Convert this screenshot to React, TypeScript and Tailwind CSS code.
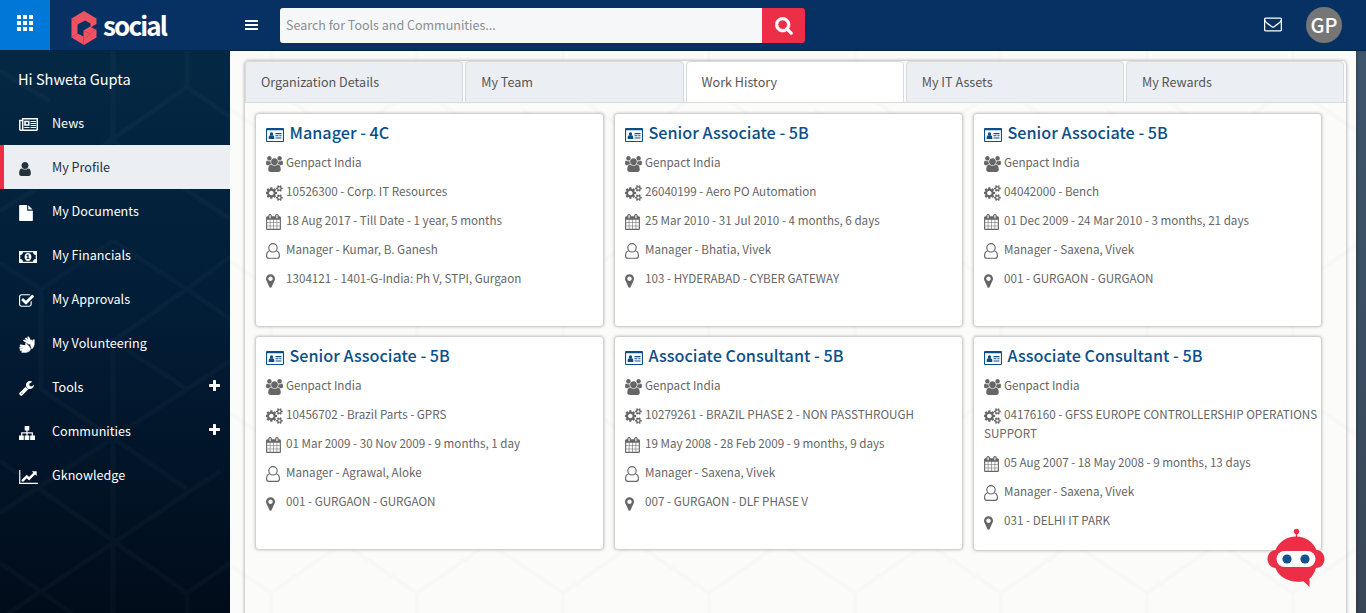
import React from "react";

const CALENDAR = "M192 1664h288v-288h-288v288zm352 0h320v-288h-320v288zm-352-352h288v-320h-288v320zm352 0h320v-320h-320v320zm-352-384h288v-288h-288v288zm736 736h320v-288h-320v288zm-384-736h320v-288h-320v288zm768 736h288v-288h-288v288zm-384-352h320v-320h-320v320zm-352-864v-288q0-13-9.5-22.5t-22.5-9.5h-64q-13 0-22.5 9.5t-9.5 22.5v288q0 13 9.5 22.5t22.5 9.5h64q13 0 22.5-9.5t9.5-22.5zm736 864h288v-320h-288v320zm-384-384h320v-288h-320v288zm384 0h288v-288h-288v288zm32-480v-288q0-13-9.5-22.5t-22.5-9.5h-64q-13 0-22.5 9.5t-9.5 22.5v288q0 13 9.5 22.5t22.5 9.5h64q13 0 22.5-9.5t9.5-22.5zm384-64v1280q0 52-38 90t-90 38h-1408q-52 0-90-38t-38-90v-1280q0-52 38-90t90-38h128v-96q0-66 47-113t113-47h64q66 0 113 47t47 113v96h384v-96q0-66 47-113t113-47h64q66 0 113 47t47 113v96h128q52 0 90 38t38 90z";
const USERS = "M529 896q-162 5-265 128h-134q-82 0-138-40.5t-56-118.5q0-353 124-353 6 0 43.5 21t97.5 42.5 119 21.5q67 0 133-23-5 37-5 66 0 139 81 256zm1071 637q0 120-73 189.5t-194 69.5h-874q-121 0-194-69.5t-73-189.5q0-53 3.5-103.5t14-109 26.5-108.5 43-97.5 62-81 85.5-53.5 111.5-20q10 0 43 21.5t73 48 107 48 135 21.5 135-21.5 107-48 73-48 43-21.5q61 0 111.5 20t85.5 53.5 62 81 43 97.5 26.5 108.5 14 109 3.5 103.5zm-1024-1277q0 106-75 181t-181 75-181-75-75-181 75-181 181-75 181 75 75 181zm704 384q0 159-112.5 271.5t-271.5 112.5-271.5-112.5-112.5-271.5 112.5-271.5 271.5-112.5 271.5 112.5 112.5 271.5zm576 225q0 78-56 118.5t-138 40.5h-134q-103-123-265-128 81-117 81-256 0-29-5-66 66 23 133 23 59 0 119-21.5t97.5-42.5 43.5-21q124 0 124 353zm-128-609q0 106-75 181t-181 75-181-75-75-181 75-181 181-75 181 75 75 181z";
const SEARCH = "M1216 832q0-185-131.5-316.5t-316.5-131.5-316.5 131.5-131.5 316.5 131.5 316.5 316.5 131.5 316.5-131.5 131.5-316.5zm512 832q0 52-38 90t-90 38q-54 0-90-38l-343-342q-179 124-399 124-143 0-273.5-55.5t-225-150-150-225-55.5-273.5 55.5-273.5 150-225 225-150 273.5-55.5 273.5 55.5 225 150 150 225 55.5 273.5q0 220-124 399l343 343q37 37 37 90z";
const USER = "M1536 1399q0 109-62.5 187t-150.5 78h-854q-88 0-150.5-78t-62.5-187q0-85 8.5-160.5t31.5-152 58.5-131 94-89 134.5-34.5q131 128 313 128t313-128q76 0 134.5 34.5t94 89 58.5 131 31.5 152 8.5 160.5zm-256-887q0 159-112.5 271.5t-271.5 112.5-271.5-112.5-112.5-271.5 112.5-271.5 271.5-112.5 271.5 112.5 112.5 271.5z";
const MARKER = "M1152 640q0-106-75-181t-181-75-181 75-75 181 75 181 181 75 181-75 75-181zm256 0q0 109-33 179l-364 774q-16 33-47.5 52t-67.5 19-67.5-19-46.5-52l-365-774q-33-70-33-179 0-212 150-362t362-150 362 150 150 362z";
const COGS = "M832 896q0-106-75-181t-181-75-181 75-75 181 75 181 181 75 181-75 75-181zm768 512q0-52-38-90t-90-38-90 38-38 90q0 53 37.5 90.5t90.5 37.5 90.5-37.5 37.5-90.5zm0-1024q0-52-38-90t-90-38-90 38-38 90q0 53 37.5 90.5t90.5 37.5 90.5-37.5 37.5-90.5zm-384 421v185q0 10-7 19.5t-16 10.5l-155 24q-11 35-32 76 34 48 90 115 7 11 7 20 0 12-7 19-23 30-82.5 89.5t-78.5 59.5q-11 0-21-7l-115-90q-37 19-77 31-11 108-23 155-7 24-30 24h-186q-11 0-20-7.5t-10-17.5l-23-153q-34-10-75-31l-118 89q-7 7-20 7-11 0-21-8-144-133-144-160 0-9 7-19 10-14 41-53t47-61q-23-44-35-82l-152-24q-10-1-17-9.5t-7-19.5v-185q0-10 7-19.5t16-10.5l155-24q11-35 32-76-34-48-90-115-7-11-7-20 0-12 7-20 22-30 82-89t79-59q11 0 21 7l115 90q34-18 77-32 11-108 23-154 7-24 30-24h186q11 0 20 7.5t10 17.5l23 153q34 10 75 31l118-89q8-7 20-7 11 0 21 8 144 133 144 160 0 8-7 19-12 16-42 54t-45 60q23 48 34 82l152 23q10 2 17 10.5t7 19.5zm640 533v140q0 16-149 31-12 27-30 52 51 113 51 138 0 4-4 7-122 71-124 71-8 0-46-47t-52-68q-20 2-30 2t-30-2q-14 21-52 68t-46 47q-2 0-124-71-4-3-4-7 0-25 51-138-18-25-30-52-149-15-149-31v-140q0-16 149-31 13-29 30-52-51-113-51-138 0-4 4-7 4-2 35-20t59-34 30-16q8 0 46 46.5t52 67.5q20-2 30-2t30 2q51-71 92-112l6-2q4 0 124 70 4 3 4 7 0 25-51 138 17 23 30 52 149 15 149 31zm0-1024v140q0 16-149 31-12 27-30 52 51 113 51 138 0 4-4 7-122 71-124 71-8 0-46-47t-52-68q-20 2-30 2t-30-2q-14 21-52 68t-46 47q-2 0-124-71-4-3-4-7 0-25 51-138-18-25-30-52-149-15-149-31v-140q0-16 149-31 13-29 30-52-51-113-51-138 0-4 4-7 4-2 35-20t59-34 30-16q8 0 46 46.5t52 67.5q20-2 30-2t30 2q51-71 92-112l6-2q4 0 124 70 4 3 4 7 0 25-51 138 17 23 30 52 149 15 149 31z";
const ENVELOPE = "M1664 1504v-768q-32 36-69 66-268 206-426 338-51 43-83 67t-86.5 48.5-102.5 24.5h-2q-48 0-102.5-24.5t-86.5-48.5-83-67q-158-132-426-338-37-30-69-66v768q0 13 9.5 22.5t22.5 9.5h1472q13 0 22.5-9.5t9.5-22.5zm0-1051v-24.5l-.5-13-3-12.5-5.5-9-9-7.5-14-2.5h-1472q-13 0-22.5 9.5t-9.5 22.5q0 168 147 284 193 152 401 317 6 5 35 29.5t46 37.5 44.5 31.5 50.5 27.5 43 9h2q20 0 43-9t50.5-27.5 44.5-31.5 46-37.5 35-29.5q208-165 401-317 54-43 100.5-115.5t46.5-131.5zm128-37v1088q0 66-47 113t-113 47h-1472q-66 0-113-47t-47-113v-1088q0-66 47-113t113-47h1472q66 0 113 47t47 113z";
const CHECK = "M1472 930v318q0 119-84.5 203.5t-203.5 84.5h-832q-119 0-203.5-84.5t-84.5-203.5v-832q0-119 84.5-203.5t203.5-84.5h832q63 0 117 25 15 7 18 23 3 17-9 29l-49 49q-10 10-23 10-3 0-9-2-23-6-45-6h-832q-66 0-113 47t-47 113v832q0 66 47 113t113 47h832q66 0 113-47t47-113v-254q0-13 9-22l64-64q10-10 23-10 6 0 12 3 20 8 20 29zm231-489l-814 814q-24 24-57 24t-57-24l-430-430q-24-24-24-57t24-57l110-110q24-24 57-24t57 24l263 263 647-647q24-24 57-24t57 24l110 110q24 24 24 57t-24 57z";
const CHART = "M2048 1536v128h-2048v-1536h128v1408h1920zm-128-1248v435q0 21-19.5 29.5t-35.5-7.5l-121-121-633 633q-10 10-23 10t-23-10l-233-233-416 416-192-192 585-585q10-10 23-10t23 10l233 233 464-464-121-121q-16-16-7.5-35.5t29.5-19.5h435q14 0 23 9t9 23z";
const PLUS = "M1600 736v192q0 40-28 68t-68 28h-416v416q0 40-28 68t-68 28h-192q-40 0-68-28t-28-68v-416h-416q-40 0-68-28t-28-68v-192q0-40 28-68t68-28h416v-416q0-40 28-68t68-28h192q40 0 68 28t28 68v416h416q40 0 68 28t28 68z";
const FILE = "M1152 512v-472q22 14 36 28l408 408q14 14 28 36h-472zm-128 32q0 40 28 68t68 28h544v1056q0 40-28 68t-68 28h-1344q-40 0-68-28t-28-68v-1600q0-40 28-68t68-28h800v544z";
const WRENCH = "M448 1472q0-26-19-45t-45-19-45 19-19 45 19 45 45 19 45-19 19-45zm644-420l-682 682q-37 37-90 37-52 0-91-37l-106-108q-38-36-38-90 0-53 38-91l681-681q39 98 114.5 173.5t173.5 114.5zm634-435q0 39-23 106-47 134-164.5 217.5t-258.5 83.5q-185 0-316.5-131.5t-131.5-316.5 131.5-316.5 316.5-131.5q58 0 121.5 16.5t107.5 46.5q16 11 16 28t-16 28l-293 169v224l193 107q5-3 79-48.5t135.5-81 70.5-35.5q15 0 23.5 10t8.5 25z";

function Glyph({ d, box, className }: { d: string; box: string; className: string }) {
  return (
    <svg viewBox={box} className={className} fill="currentColor">
      <path d={d} />
    </svg>
  );
}

const NewsIcon = () => (
  <svg viewBox="0 0 19 13" className="h-[13px] w-[19px]" fill="none" stroke="currentColor">
    <path d="M3.500 12.300H17a1.300 1.300 0 0 0 1.300-1.300V.8H3.700V11a1.400 1.400 0 0 1-2.900 0V2.500h2.700" strokeWidth="1.500" />
    <rect x="6" y="3.500" width="3.800" height="3.500" strokeWidth="1.600" />
    <path d="M11.500 3.500H17M11.500 5.500H17M11.500 7.500H17M5.200 9.500h5.300M11.500 9.500H17" strokeWidth="1.100" />
  </svg>
);
const MoneyIcon = () => (
  <svg viewBox="0 0 18 12" className="h-3 w-[18px]" fill="currentColor" fillRule="evenodd">
    <path d="M0 0H18V12H0ZM3.900 1.300A2.600 2.600 0 0 1 1.300 3.900V8.100A2.600 2.600 0 0 1 3.900 10.700H14.100A2.600 2.600 0 0 1 16.700 8.100V3.900A2.600 2.600 0 0 1 14.100 1.300Z" />
    <path d="M9 2c2.100 0 3.400 1.800 3.400 4S11.100 10 9 10 5.600 8.200 5.600 6 6.900 2 9 2ZM8.500 3.500 7.300 4.600l.6.700.5-.4v2.300h-.9v.9h3v-.9h-.9V3.500Z" />
  </svg>
);
const HandsIcon = () => (
  <svg viewBox="0 0 16 17" className="h-[17px] w-4" fill="none" stroke="currentColor" strokeLinecap="round" strokeWidth="1.900">
    <path d="M10 7.500 5.200 4.500M10.500 6.500 7 2.600M11.500 6 9.300 1.400M14.700 4.200 14.500 8" />
    <path d="M8 5 13 4 15.200 8C15.200 10.500 14 12 12.800 13L11.300 8.600Z" fill="currentColor" strokeWidth=".5" />
    <path d="M7 10.500 1.700 9.500M7 12 1.200 11.700M7 13.700 1.700 13.900M8 15.300 3.400 15.800M9.200 11 7 8" />
    <path d="M5 9.800 9.500 9.800 11.500 12.500C11.500 15 9.500 16.500 5.500 16.300Z" fill="currentColor" strokeWidth=".5" />
  </svg>
);
const SitemapIcon = () => (
  <svg viewBox="0 0 16 14" className="h-[14px] w-4" fill="currentColor">
    <path d="M5.700 0h4.600v4.500H8.600v1.800h5.300v3.200H16V14h-4.800V9.500h1.500V7.400H8.600v2.100h1.700V14H5.700V9.500h1.700V7.400H3.300v2.100h1.500V14H0V9.500h2.100V6.300h5.300V4.500H5.700Z" />
  </svg>
);
const CardIcon = () => (
  <svg viewBox="0 0 18 14" className="h-[14px] w-[18px]" fill="currentColor">
    <path fillRule="evenodd" d="M1 0H17a1 1 0 0 1 1 1V13a1 1 0 0 1-1 1H1a1 1 0 0 1-1-1V1A1 1 0 0 1 1 0ZM1.100 2.200V12.900H16.900V2.200Z" />
    <circle cx="5.500" cy="5.900" r="1.700" />
    <path d="M2.700 11V9.600C2.700 8 3.500 7.200 4.300 7.200H6.700C7.500 7.200 8.300 8 8.300 9.600V11ZM9.500 5h6v1.200h-6ZM9.500 7.300h3v1h-3ZM13.300 7.300h2.200v1h-2.200ZM9.500 9.500h6v1.100h-6Z" />
  </svg>
);
const UserOutline = () => (
  <svg viewBox="0 0 14 16" className="h-4 w-[14px]" fill="none" stroke="currentColor" strokeWidth="1.150">
    <path d="M3.700 7.800C1.400 8.400.6 10.200.6 12.700c0 1.500 1 2.600 2.300 2.600h8.200c1.300 0 2.300-1.100 2.300-2.600 0-2.500-.8-4.300-3.100-4.900" />
    <circle cx="7" cy="4.800" r="4.200" />
  </svg>
);

const menu: { label: string; icon: React.ReactNode; active?: boolean; plus?: boolean }[] = [
  { label: "News", icon: <NewsIcon /> },
  { label: "My Profile", icon: <Glyph d={USER} box="256 128 1280 1536" className="h-[14px] w-3" />, active: true },
  { label: "My Documents", icon: <Glyph d={FILE} box="128 0 1536 1792" className="h-4 w-[14px]" /> },
  { label: "My Financials", icon: <MoneyIcon /> },
  { label: "My Approvals", icon: <Glyph d={CHECK} box="64 128 1664 1408" className="h-[13px] w-[15px]" /> },
  { label: "My Volunteering", icon: <HandsIcon /> },
  { label: "Tools", icon: <Glyph d={WRENCH} box="64 128 1664 1664" className="h-[15px] w-[15px]" />, plus: true },
  { label: "Communities", icon: <SitemapIcon />, plus: true },
  { label: "Gknowledge", icon: <Glyph d={CHART} box="0 128 2048 1536" className="h-[14px] w-[19px]" /> },
];

const jobs = [
  ["Manager - 4C", "10526300 - Corp. IT Resources", "18 Aug 2017 - Till Date - 1 year, 5 months", "Manager - Kumar, B. Ganesh", "1304121 - 1401-G-India: Ph V, STPI, Gurgaon"],
  ["Senior Associate - 5B", "26040199 - Aero PO Automation", "25 Mar 2010 - 31 Jul 2010 - 4 months, 6 days", "Manager - Bhatia, Vivek", "103 - HYDERABAD - CYBER GATEWAY"],
  ["Senior Associate - 5B", "04042000 - Bench", "01 Dec 2009 - 24 Mar 2010 - 3 months, 21 days", "Manager - Saxena, Vivek", "001 - GURGAON - GURGAON"],
  ["Senior Associate - 5B", "10456702 - Brazil Parts - GPRS", "01 Mar 2009 - 30 Nov 2009 - 9 months, 1 day", "Manager - Agrawal, Aloke", "001 - GURGAON - GURGAON"],
  ["Associate Consultant - 5B", "10279261 - BRAZIL PHASE 2 - NON PASSTHROUGH", "19 May 2008 - 28 Feb 2009 - 9 months, 9 days", "Manager - Saxena, Vivek", "007 - GURGAON - DLF PHASE V"],
  ["Associate Consultant - 5B", "04176160 - GFSS EUROPE CONTROLLERSHIP OPERATIONS SUPPORT", "05 Aug 2007 - 18 May 2008 - 9 months, 13 days", "Manager - Saxena, Vivek", "031 - DELHI IT PARK"],
];

function Row({ icon, children }: { icon: React.ReactNode; children: React.ReactNode }) {
  return (
    <p className="mb-[10px] text-[11.650px] leading-[19px] text-[#666]">
      <span className="-my-1 mr-[2px] inline-flex h-[17px] w-[18px] items-center align-[-5px]">{icon}</span>
      {children}
    </p>
  );
}

function JobCard({ job, wraps }: { job: string[]; wraps: boolean }) {
  return (
    <section className={`rounded-[3px] bg-white pt-2 pl-[10px] shadow-[0_0_3px_1px_rgba(0,0,0,0.25)] ${wraps ? "h-[213px]" : "h-[212px]"}`}>
      <h3 className="mb-[10px] flex h-5 items-center gap-[6px] text-[16.200px] leading-5 font-medium text-[#0b4f8a]">
        <span className="mt-[6px]"><CardIcon /></span>
        <span className="-ml-[0.500px]">{job[0]}</span>
      </h3>
      <Row icon={<Glyph d={USERS} box="-64 0 1920 1792" className="h-4 w-[17px]" />}>Genpact India</Row>
      <Row icon={<Glyph d={COGS} box="0 0 1856 1792" className="h-4 w-[17px]" />}>{job[1]}</Row>
      <Row icon={<Glyph d={CALENDAR} box="64 0 1664 1792" className="h-4 w-[15px]" />}>{job[2]}</Row>
      <Row icon={<UserOutline />}>{job[3]}</Row>
      <Row icon={<Glyph d={MARKER} box="384 128 1024 1536" className="mb-[2px] h-[14px] w-[9px]" />}>{job[4]}</Row>
    </section>
  );
}

const LATTICE = "M113 -8V90L0 160M113 90L230 168M0 212L41 238V338L187 438M113 190L41 238M113 190L187 238L230 206M113 290L187 238L230 268M187 338L113 290V563M187 338L230 310M187 338L0 462M0 410L187 542V563M220 420L0 568M0 512L73 563M187 542L230 512M0 20L50 50M187 -8V36L60 125M187 36L230 66";

function Lattice({ id, color }: { id: string; color: string }) {
  return (
    <svg className="absolute inset-0 h-full w-full">
      <defs>
        <pattern id={id} width="292" height="304" patternUnits="userSpaceOnUse">
          <path d="M41 -10V36L113 86L187 36V-10M113 86V188L41 238V338M113 188L187 238V338L113 290L41 338M187 238L259 188V86L187 36M259 86L333 36M-33 36L41 86M259 188L333 238M-33 188L41 238" fill="none" stroke={color} strokeWidth="4" />
        </pattern>
      </defs>
      <rect width="100%" height="100%" fill={`url(#${id})`} />
    </svg>
  );
}

const tabs = ["Organization Details", "My Team", "Work History", "My IT Assets", "My Rewards"];

export default function App() {
  return (
    <div className="relative flex h-[613px] w-[1366px] flex-col overflow-hidden font-['Noto_Sans_CJK_SC','Noto_Sans',sans-serif]">
      <header className="relative z-10 flex h-[51px] shrink-0 items-start border-b border-[#052347] bg-[#083163] text-white">
        <div className="flex h-[50px] w-[50px] items-start justify-center bg-[#0078d7] pt-[15px]">
          <svg viewBox="0 0 16 16" className="h-4 w-4" fill="currentColor">
            <path d="M0 0h4v4H0zM6 0h4v4H6zM12 0h4v4h-4zM0 6h4v4H0zM6 6h4v4H6zM12 6h4v4h-4zM0 12h4v4H0zM6 12h4v4H6zM12 12h4v4h-4z" />
          </svg>
        </div>
        <div className="flex w-[194px] items-start pt-[11px] pl-[21px]">
          <svg viewBox="0 0 26 34" className="h-[34px] w-[26px]">
            <path d="M13 0 25.500 7.500V13L19.500 16.500V12.500L14 9.500 6.500 13.500V22.500L12.500 25.500V19.500L19 15.500 25.500 19V26.500L13 34 .5 26.500V7.500Z" fill="#ef5361" />
            <path d="M.5 7.500 6.500 13.500M.5 26.500 6.500 22.500M12.500 25.500V34M12.500 19.500 19 23 25.500 17.500M19 23 12.500 29" fill="none" stroke="#c93750" strokeWidth=".7" />
          </svg>
          <span className="mt-[-2px] ml-[6px] text-[26px] leading-[32px] font-bold tracking-[-1.850px]">social</span>
        </div>
        <svg viewBox="0 0 13 11" className="mt-5 ml-px h-[11px] w-[13px]" fill="currentColor" shapeRendering="crispEdges">
          <path d="M0 0h13v2H0zM0 4h13v2H0zM0 8h13v2H0z" />
        </svg>
        <div className="mt-2 ml-[22px] flex h-[35px] w-[525px] overflow-hidden rounded-[3px]">
          <div className="w-[482px] bg-[#f6f7f9] pl-[6px] text-[12.500px] leading-[34px] text-[#8d8d8d]">Search for Tools and Communities...</div>
          <div className="flex flex-1 items-center justify-center bg-[#ec2e47]">
            <svg viewBox="34 98 1724 1724" className="h-[18px] w-[18px]" fill="currentColor" stroke="currentColor" strokeWidth="60">
              <path d={SEARCH} />
            </svg>
          </div>
        </div>
        <div className="flex-1" />
        <Glyph d={ENVELOPE} box="0 256 1792 1408" className="mt-[17px] mr-6 h-[15px] w-[18px]" />
        <div className="mt-[7px] mr-6 flex h-9 w-9 items-center justify-center rounded-full bg-[#767676] pb-px text-[20px] font-medium">GP</div>
      </header>

      <div className="flex min-h-0 flex-1">
        <aside className="relative w-[230px] shrink-0 bg-linear-to-b from-[#042844] via-[#021c35] to-[#010c1a] text-white">
          <svg className="absolute inset-0 h-full w-full" fill="none" stroke="#ffffff" strokeOpacity=".025" strokeWidth="5">
            <path d={LATTICE} />
          </svg>
          <div className="relative flex h-[50px] items-center pt-[6px] pl-[18px] text-[14.600px]">Hi Shweta Gupta</div>
          <nav className="relative">
            {menu.map((m) => (
              <div key={m.label} className={`flex h-11 items-center pr-[10px] text-[12.600px] ${m.active ? "border-l-4 border-[#ec2e47] bg-[#ebeef3] pl-[15px] text-[#24323a]" : "pl-[19px]"}`}>
                <span className="mt-[3px] w-[33px]">{m.icon}</span>
                <span className="flex-1">{m.label}</span>
                {m.plus && <Glyph d={PLUS} box="192 128 1408 1408" className="mb-[3px] h-[11px] w-[11px]" />}
              </div>
            ))}
          </nav>
        </aside>

        <main className="relative w-[1126px] bg-[#fbfbfa] px-[15px] pt-[10px]">
          <Lattice id="mesh" color="#f8f8f7" />
          <div className="relative h-[600px] w-[1101px] rounded-[4px] shadow-[0_0_3px_1px_rgba(0,0,0,0.25)]">
            <div className="flex h-[42px] gap-[2px] border-b border-[#d9dadd]">
              {tabs.map((t) => (
                <div key={t} className={`h-[42px] w-[218.250px] rounded-t-[4px] border border-[#d9dadd] pl-[15px] text-[12.600px] leading-[40px] text-[#555] ${t === "Work History" ? "bg-white" : "bg-[#ebeef3]"}`}>{t}</div>
              ))}
            </div>
            <div className="grid grid-cols-[347px_347px_347px] items-start gap-x-[12px] gap-y-[11px] pt-[11px] pl-[11px]">
              {jobs.map((j, i) => <JobCard key={i} job={j} wraps={i === 5} />)}
            </div>
          </div>
        </main>
        <div className="relative flex-1 bg-linear-to-b from-[#3d566c] to-[#394656] shadow-[inset_2px_0_2px_rgba(0,0,0,0.15)]" />
      </div>

      <svg viewBox="0 0 58 60" className="absolute top-[528px] left-[1267px] h-[60px] w-[58px]">
        <circle cx="29.500" cy="3.500" r="2.700" fill="#ec2e47" />
        <path d="M29.500 4V10" stroke="#ec2e47" strokeWidth="1.500" />
        <path d="M29 8.500C39 8.500 46 14 49.500 22C54 22 57.500 26 57.500 31S54 40 49 40C47.500 45 45 49 42.500 50.500V59L36.500 53.200C24 55.500 12 50 8.500 40C4 40 .5 36 .5 31S4 22.500 8.500 22C12 14 19 8.500 29 8.500Z" fill="#ec2e47" />
        <rect x="9.500" y="23" width="39" height="16" rx="8" fill="#fff" />
        <circle cx="20" cy="31" r="4.600" fill="#10538f" />
        <circle cx="38" cy="31" r="4.600" fill="#10538f" />
      </svg>
    </div>
  );
}
